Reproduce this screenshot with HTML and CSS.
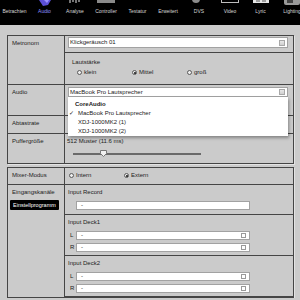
FILE: index.html
```html
<!DOCTYPE html>
<html lang="de">
<head>
    <meta charset="UTF-8">
    <meta name="viewport" content="width=device-width, initial-scale=1.0">
    <title>Einstellungen - Audio</title>
    <link rel="stylesheet" href="styles.css">
</head>
<body>
    <div class="topbar">
        <div class="tab"><span class="tab-icon"></span><span class="tab-label">Betrachten</span></div>
        <div class="tab active">
            <svg class="tab-icon" viewBox="0 0 18 6"><path d="M3 0 L15 0 L12 5 L7 6 Z" fill="#5b4fd6"/><path d="M8 0 L13 0 L11 3 Z" fill="#9a90ff"/></svg>
            <span class="tab-label">Audio</span>
        </div>
        <div class="tab">
            <svg class="tab-icon" viewBox="0 0 18 6"><path d="M4 0 V3 M7 0 V2 M10 0 V3 M13 0 V2" stroke="#e8e8e8" stroke-width="1"/></svg>
            <span class="tab-label">Analyse</span>
        </div>
        <div class="tab">
            <svg class="tab-icon" viewBox="0 0 18 6"><rect x="0" y="0" width="18" height="3" fill="#8a8a8a"/></svg>
            <span class="tab-label">Controller</span>
        </div>
        <div class="tab"><span class="tab-icon"></span><span class="tab-label">Testatur</span></div>
        <div class="tab"><span class="tab-icon"></span><span class="tab-label">Erweitert</span></div>
        <div class="tab">
            <svg class="tab-icon" viewBox="0 0 18 6"><circle cx="6" cy="-1" r="4" fill="#8c8c8c"/></svg>
            <span class="tab-label">DVS</span>
        </div>
        <div class="tab">
            <svg class="tab-icon" viewBox="0 0 18 6"><rect x="0.5" y="-1" width="17" height="3.5" fill="none" stroke="#bdbdbd"/></svg>
            <span class="tab-label">Video</span>
        </div>
        <div class="tab">
            <svg class="tab-icon" viewBox="0 0 18 6"><rect x="1" y="0" width="16" height="3" fill="#e6e6e6"/><path d="M4 1 H8 M10 1 H14" stroke="#555" stroke-width="1"/></svg>
            <span class="tab-label">Lyric</span>
        </div>
        <div class="tab">
            <svg class="tab-icon" viewBox="0 0 18 6"><rect x="1" y="-2" width="16" height="7" rx="2" fill="#9a9a9a"/><rect x="4" y="0" width="6" height="3" fill="#444"/></svg>
            <span class="tab-label">Lighting</span>
        </div>
    </div>

    <div class="main">
        <div class="panel">
            <div class="row">
                <div class="row-label">Metronom</div>
                <div class="row-body">
                    <div class="field-line">
                        <div class="field">Klickgeräusch 01<span class="drop"></span></div>
                    </div>
                    <div class="sub">
                        <div class="text">Lautstärke</div>
                        <div class="radios volume">
                            <span class="radio"><span class="dot"></span>klein</span>
                            <span class="radio"><span class="dot on"></span>Mittel</span>
                            <span class="radio"><span class="dot"></span>groß</span>
                        </div>
                    </div>
                </div>
            </div>
            <div class="row">
                <div class="row-label">Audio</div>
                <div class="row-body audio-body">
                    <div class="select-wrap">
                        <div class="field short">MacBook Pro Lautsprecher<span class="drop"></span></div>
                        <div class="popup">
                            <div class="popup-head">CoreAudio</div>
                            <div class="popup-item"><span class="check">✓</span>MacBook Pro Lautsprecher</div>
                            <div class="popup-item"><span class="check"></span>XDJ-1000MK2 (1)</div>
                            <div class="popup-item"><span class="check"></span>XDJ-1000MK2 (2)</div>
                        </div>
                    </div>
                </div>
            </div>
            <div class="row">
                <div class="row-label short-row">Abtastrate</div>
                <div class="row-body"></div>
            </div>
            <div class="row">
                <div class="row-label">Puffergröße</div>
                <div class="row-body buffer-body">
                    <div class="text">512 Muster (11.6 ms)</div>
                    <div class="slider">
                        <svg class="thumb" viewBox="0 0 7 7"><path d="M0.5 0.5 H6.5 V3.5 L3.5 6.5 L0.5 3.5 Z" fill="#f1f1f1" stroke="#777"/></svg>
                    </div>
                </div>
            </div>
        </div>

        <div class="panel">
            <div class="row">
                <div class="row-label">Mixer-Modus</div>
                <div class="row-body mixer-body">
                    <div class="radios">
                        <span class="radio"><span class="dot"></span>Intern</span>
                        <span class="radio"><span class="dot on"></span>Extern</span>
                    </div>
                </div>
            </div>
            <div class="row">
                <div class="row-label">
                    Eingangskanäle
                    <div class="preset-btn">Einstellprogramm</div>
                </div>
                <div class="row-body">
                    <div class="input-block">
                        <div class="text">Input Record</div>
                        <div class="channel"><span class="ch"></span><div class="field small">-</div></div>
                    </div>
                    <div class="input-block">
                        <div class="text">Input Deck1</div>
                        <div class="channel"><span class="ch">L</span><div class="field small">-<span class="box"></span></div></div>
                        <div class="channel"><span class="ch">R</span><div class="field small">-<span class="box"></span></div></div>
                    </div>
                    <div class="input-block">
                        <div class="text">Input Deck2</div>
                        <div class="channel"><span class="ch">L</span><div class="field small">-<span class="box"></span></div></div>
                        <div class="channel"><span class="ch">R</span><div class="field small">-<span class="box"></span></div></div>
                    </div>
                </div>
            </div>
        </div>
    </div>
</body>
</html>
```

FILE: styles.css
```css
body {
    margin: 0;
    background-color: #cbcbcb;
    font-family: "Liberation Sans", Arial, sans-serif;
    font-size: 6px;
    color: #222;
    overflow: hidden;
}
.topbar {
    height: 25px;
    background-color: #000;
    display: grid;
    grid-template-columns: 29px 31px 30px 32px 31px 30px 32px 30px 31px 32px;
    overflow: hidden;
}
.tab {
    display: flex;
    flex-direction: column;
    align-items: center;
}
.tab-icon {
    display: block;
    width: 18px;
    height: 6px;
}
.tab-label {
    margin-top: 2px;
    font-size: 5px;
    line-height: 6px;
    color: #d6d6d6;
    white-space: nowrap;
}
.tab.active .tab-label {
    color: #9090ff;
}
.main {
    padding: 10px 6px 0 7px;
}
.panel {
    border: 1px solid #454545;
    box-shadow: 1px 1px 0 #e3e3e3;
}
.panel + .panel {
    margin-top: 3px;
}
.row {
    display: grid;
    grid-template-columns: 57px 1fr;
    border-top: 1px solid #454545;
}
.row:first-child {
    border-top: none;
}
.row-label {
    border-right: 1px solid #454545;
    padding: 4px 0 0 4px;
    line-height: 7px;
}
.short-row {
    padding-bottom: 6px;
}
.text {
    line-height: 7px;
}
.field {
    box-sizing: border-box;
    height: 11px;
    background-color: #fff;
    border: 1px solid #a2a2a2;
    display: flex;
    align-items: center;
    padding: 0 2px 0 1px;
    line-height: 7px;
}
.field.short {
    height: 10px;
}
.field.small {
    height: 9px;
    width: 174px;
    padding-left: 4px;
}
.drop {
    margin-left: auto;
    width: 4px;
    height: 4px;
    border: 1px solid #a8a8a8;
    background: linear-gradient(#e8e8e8, #cfcfcf);
}
.box {
    margin-left: auto;
    margin-right: 1px;
    width: 3px;
    height: 3px;
    border: 1px solid #9a9a9a;
}
.field-line {
    padding: 1px 5px 4px 3px;
    border-bottom: 1px solid #454545;
}
.sub {
    padding: 6px 0 8px 7px;
}
.radios {
    display: grid;
    grid-template-columns: 55px 55px 55px;
    line-height: 7px;
}
.volume {
    margin-top: 3px;
    padding-left: 5px;
}
.radio {
    display: flex;
    align-items: center;
}
.dot {
    box-sizing: border-box;
    width: 5px;
    height: 5px;
    border: 1px solid #5a5a5a;
    border-radius: 50%;
    background-color: #eee;
    margin-right: 2px;
    position: relative;
}
.dot.on::after {
    content: "";
    position: absolute;
    left: 0.5px;
    top: 0.5px;
    width: 2px;
    height: 2px;
    border-radius: 50%;
    background-color: #111;
}
.audio-body {
    padding: 2px 5px 18px 3px;
}
.select-wrap {
    position: relative;
}
.popup {
    position: absolute;
    left: 0;
    top: 100%;
    right: 0;
    background-color: #fff;
    padding-top: 3px;
    box-shadow: 1px 2px 3px rgba(0, 0, 0, 0.35);
    z-index: 2;
}
.popup-head {
    font-weight: bold;
    line-height: 9px;
    padding-left: 7px;
}
.popup-item {
    display: flex;
    line-height: 9px;
}
.check {
    width: 10px;
    padding-left: 1px;
    box-sizing: border-box;
}
.buffer-body {
    padding: 4px 0 8px 2px;
}
.slider {
    position: relative;
    margin: 8px 0 0 6px;
    width: 128px;
    height: 2px;
    background-color: #6a6a6a;
}
.thumb {
    position: absolute;
    left: 27px;
    top: -3px;
    width: 7px;
    height: 7px;
}
.mixer-body {
    padding: 4px 0 5px 4px;
}
.preset-btn {
    display: inline-block;
    margin: 4px 0 0 -2px;
    padding: 0 3px;
    height: 10px;
    line-height: 10px;
    font-size: 5.5px;
    background-color: #000;
    color: #fff;
    border-radius: 1px;
    white-space: nowrap;
}
.input-block {
    padding: 4px 0 3px 3px;
    border-bottom: 1px solid #454545;
}
.input-block:first-child {
    padding-bottom: 4px;
}
.channel {
    display: flex;
    margin-top: 3px;
}
.text + .channel {
    margin-top: 5px;
}
.ch {
    width: 8px;
    padding-left: 2px;
    box-sizing: border-box;
    line-height: 9px;
}
```
